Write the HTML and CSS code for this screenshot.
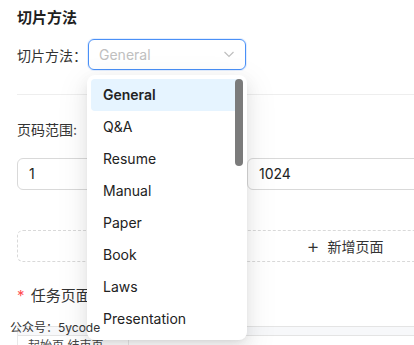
FILE: index.html
```html
<!DOCTYPE html>
<html lang="zh-CN">
<head>
    <meta charset="UTF-8">
    <title>切片方法</title>
    <link rel="stylesheet" href="styles.css">
</head>
<body>
    <div class="page">
        <h3 class="title">切片方法</h3>
        <div class="form-row">
            <span class="label">切片方法：</span>
            <div class="select">
                <span class="placeholder">General</span>
                <svg class="arrow" width="12" height="12" viewBox="0 0 12 12"><path d="M1.5 4 L6 8.5 L10.5 4" fill="none" stroke="#bfbfbf" stroke-width="1.2"/></svg>
            </div>
        </div>

        <div class="divider"></div>

        <div class="label range-label">页码范围:</div>
        <div class="range">
            <div class="input">1</div>
            <div class="input">1024</div>
        </div>

        <div class="add-page">
            <span class="plus">+</span> 新增页面
        </div>

        <div class="task-label"><span class="req">*</span> 任务页面范围</div>

        <div class="table">
            <div class="thead"></div>
            <div class="trow">
                <div class="cell first">起始页 结束页</div>
                <div class="cell"></div>
            </div>
        </div>
    </div>

    <div class="dropdown">
        <div class="option active">General</div>
        <div class="option">Q&amp;A</div>
        <div class="option">Resume</div>
        <div class="option">Manual</div>
        <div class="option">Paper</div>
        <div class="option">Book</div>
        <div class="option">Laws</div>
        <div class="option">Presentation</div>
        <div class="scrollbar"></div>
    </div>

    <div class="watermark">公众号：5ycode</div>
</body>
</html>
```

FILE: styles.css
```css
body {
    font-family: Inter, "Noto Sans CJK SC", sans-serif;
    margin: 0;
    background: #fff;
    color: rgba(0,0,0,0.88);
    font-size: 14px;
    overflow: hidden;
    width: 414px;
    height: 345px;
    position: relative;
}
.page {
    width: 656px;
    padding: 0 17px;
}
.title {
    margin: 0;
    padding-top: 7px;
    font-size: 15px;
    font-weight: 700;
    line-height: 22px;
    color: #1f1f1f;
}
.form-row {
    display: flex;
    align-items: center;
    margin-top: 10px;
}
.label {
    font-size: 14px;
    color: #333;
    width: 71px;
}
.select {
    height: 29px;
    border: 1px solid #4a90f7;
    border-radius: 6px;
    box-shadow: 0 0 0 1px rgba(22,119,255,0.12);
    display: flex;
    align-items: center;
    justify-content: space-between;
    padding: 0 10px;
    width: 136px;
}
.placeholder {
    color: #c0c0c0;
}
.arrow {
    margin-top: -2px;
}
.divider {
    height: 1px;
    background: #eeeeee;
    margin-top: 24px;
}
.range-label {
    width: auto;
    margin-top: 25px;
    line-height: 20px;
}
.range {
    display: flex;
    gap: 10px;
    margin-top: 18px;
}
.input {
    width: 196px;
    height: 30px;
    line-height: 30px;
    border: 1px solid #d9d9d9;
    border-radius: 6px;
    padding: 0 11px;
    font-size: 14px;
    color: #222;
}
.input + .input {
    flex: 1;
}
.add-page {
    margin-top: 40px;
    height: 30px;
    border: 1px dashed #d9d9d9;
    border-radius: 6px;
    display: flex;
    align-items: center;
    justify-content: center;
    gap: 8px;
    color: #333;
}
.plus {
    font-size: 20px;
    font-weight: 300;
    line-height: 20px;
}
.task-label {
    margin-top: 24px;
    font-size: 15px;
    line-height: 20px;
    color: #333;
}
.req {
    color: #ff4d4f;
    margin-right: 2px;
}
.table {
    margin-top: 20px;
    border-left: 1px solid #e8e8e8;
}
.thead {
    height: 8px;
    background: #f7f8fa;
    border-top: 1px solid #e4e4e4;
    border-bottom: 1px solid #e4e4e4;
}
.trow {
    display: flex;
}
.cell {
    height: 14px;
    padding: 3px 10px 0;
    font-size: 12px;
    line-height: 14px;
    color: #444;
}
.cell.first {
    width: 90px;
    border-right: 1px solid #e8e8e8;
}
.watermark {
    position: absolute;
    left: 10px;
    top: 318px;
    font-size: 12px;
    color: #333;
}
.dropdown {
    position: absolute;
    left: 87px;
    top: 75px;
    width: 152px;
    height: 257px;
    padding: 4px;
    background: #fff;
    border-radius: 8px;
    box-shadow: 0 6px 16px rgba(0,0,0,0.08), 0 3px 6px -4px rgba(0,0,0,0.12), 0 9px 28px 8px rgba(0,0,0,0.05);
    overflow: hidden;
}
.option {
    height: 32px;
    line-height: 32px;
    padding: 0 12px;
    border-radius: 4px;
    color: #222;
    font-size: 14px;
}
.option.active {
    background: #e6f4ff;
    font-weight: 600;
}
.scrollbar {
    position: absolute;
    right: 4px;
    top: 4px;
    width: 8px;
    height: 87px;
    background: #7b7b7b;
    border-radius: 4px;
}
```
